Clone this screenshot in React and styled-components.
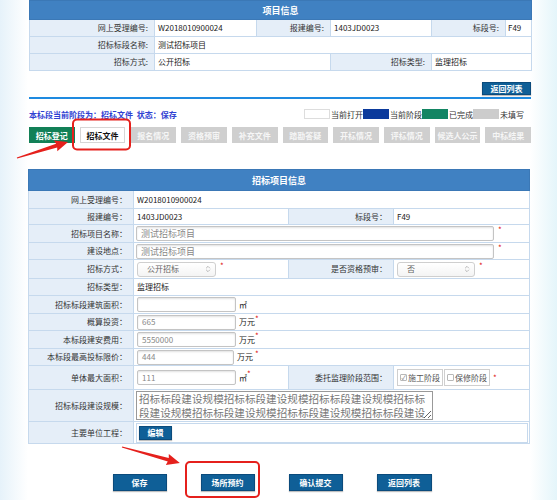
import React from 'react';
import styled, { createGlobalStyle } from 'styled-components';
import { ChevronsUpDown } from 'lucide-react';

const GlobalStyle = createGlobalStyle`
  html, body {
    margin: 0;
    padding: 0;
  }
  body {
    width: 557px;
    height: 500px;
    overflow: hidden;
    background: linear-gradient(to right, #e6f2fa 0, #fff 28px, #fff 530px, #e4f5fa 557px);
    font-family: "Noto Sans CJK SC", "Noto Sans", sans-serif;
  }
`;

const Page = styled.div`
  position: relative;
  width: 557px;
  height: 500px;
`;

const Content = styled.div`
  width: 502px;
  padding-left: 29px;
`;

const Table = styled.table`
  width: ${p => p.$w}px;
  margin-left: ${p => p.$shift || 0}px;
  border-collapse: collapse;
  table-layout: fixed;
  font-size: 8px;
  line-height: 1;
  color: #222;
`;

const Head = styled.th`
  height: ${p => p.$h}px;
  padding: 0;
  background: #4081c2;
  border: 1px solid #3b78b6;
  color: #fff;
  font-size: 9px;
  font-weight: 700;
  text-align: center;
`;

const Row = styled.tr`
  height: ${p => p.$h}px;
`;

const Label = styled.td`
  padding: 0 6px 0 0;
  background: #e5eef8;
  border: 1px solid #c6d9ed;
  color: #333;
  text-align: right;
  white-space: nowrap;
`;

const Value = styled.td`
  padding: 0 0 0 ${p => p.$pad ?? 3}px;
  background: #fff;
  border: 1px solid #c6d9ed;
  color: #222;
  white-space: nowrap;
`;

const Toolbar = styled.div`
  display: flex;
  justify-content: flex-end;
  margin-top: 11px;
`;

const SmallButton = styled.button`
  width: ${p => p.$w}px;
  height: ${p => p.$h}px;
  padding: 0;
  border: 1px solid #0b4b7c;
  background: #0f5f97;
  color: #fff;
  font-family: inherit;
  font-size: 8px;
  font-weight: 700;
  line-height: 1;
  box-shadow: 0 1px 1px rgba(0, 0, 0, 0.25);
`;

const BlueLine = styled.div`
  height: 2px;
  margin-top: 2px;
  background: #1e8ae0;
`;

const StatusRow = styled.div`
  display: flex;
  justify-content: space-between;
  align-items: center;
  height: 10px;
  margin-top: 10px;
  padding-right: 7px;
  font-size: 8px;
`;

const StatusText = styled.div`
  color: #2f41d2;
  font-weight: 700;
  white-space: pre;
`;

const Legend = styled.div`
  display: flex;
  align-items: center;
  color: #333;
`;

const Swatch = styled.span`
  width: 26px;
  height: 10px;
  box-sizing: border-box;
  background: ${p => p.$c};
  border: 1px solid ${p => (p.$c === '#fff' ? '#ddd' : p.$c)};
  margin-right: 1px;
`;

const Tabs = styled.div`
  display: flex;
  gap: 5px;
  height: 16px;
  margin-top: 8px;
`;

const tabColors = {
  done: { bg: '#128057', fg: '#fff', border: '#128057' },
  open: { bg: '#fff', fg: '#111', border: '#d6d6d6' },
  empty: { bg: '#cfcfcf', fg: '#f6f6f6', border: '#cfcfcf' },
};

const Tab = styled.div`
  flex: 1;
  display: flex;
  align-items: center;
  justify-content: center;
  box-sizing: border-box;
  background: ${p => tabColors[p.$state].bg};
  color: ${p => tabColors[p.$state].fg};
  border: 1px solid ${p => tabColors[p.$state].border};
  font-size: 8px;
  font-weight: 700;
  white-space: nowrap;
`;

const FormBlock = styled.div`
  margin-top: 26px;
`;

const TextInput = styled.div`
  display: inline-flex;
  align-items: center;
  vertical-align: middle;
  box-sizing: border-box;
  width: ${p => p.$w}px;
  height: 15px;
  padding: 0 4px;
  background: #fff;
  border: 1px solid #c4c4c4;
  border-radius: 2px;
  box-shadow: inset 0 1px 2px rgba(0, 0, 0, 0.12);
  color: #888;
  font-size: ${p => p.$fs || 8}px;
`;

const Select = styled.div`
  display: inline-flex;
  align-items: center;
  justify-content: space-between;
  vertical-align: middle;
  box-sizing: border-box;
  width: ${p => p.$w}px;
  height: 15px;
  padding: 0 3px 0 9px;
  border: 1px solid #cfcfcf;
  border-radius: 3px;
  background: linear-gradient(#fff, #f4f4f4);
  color: #666;
`;

const Star = styled.span`
  display: inline-block;
  vertical-align: top;
  margin-left: ${p => p.$gap ?? 4}px;
  color: #e01010;
  font-size: 8px;
  line-height: 8px;
`;

const Unit = styled.span`
  margin-left: 3px;
  color: #222;
  vertical-align: middle;
`;

const Options = styled.div`
  display: flex;
  align-items: center;
  gap: 1px;
`;

const Option = styled.div`
  display: flex;
  align-items: center;
  gap: 1px;
  height: 15px;
  padding: 0 2px;
  border: 1px solid #cfcfcf;
  color: #555;
`;

const Check = styled.span`
  display: inline-flex;
  align-items: center;
  justify-content: center;
  width: 7px;
  height: 7px;
  box-sizing: border-box;
  border: 1px solid #b8b8b8;
  border-radius: 1px;
  font-size: 6px;
  color: #666;
`;

const ScaleArea = styled.textarea`
  display: block;
  box-sizing: border-box;
  width: 297px;
  height: 29px;
  margin: 1px 0;
  padding: 0 2px;
  border: 1px solid #999;
  overflow: hidden;
  resize: both;
  color: #777;
  font-family: "Noto Sans CJK SC", sans-serif;
  font-size: 10.6px;
  line-height: 14px;
  letter-spacing: 0;
`;

const UnitBox = styled.div`
  display: flex;
  align-items: center;
  height: 18px;
  margin-right: 1px;
  padding-left: 2px;
  border: 1px solid #c6d9ed;
`;

const Actions = styled.div`
  display: flex;
  justify-content: center;
  gap: 34px;
  margin-top: 30px;
  padding-right: 16px;
`;

const Overlay = styled.svg`
  position: absolute;
  left: 0;
  top: 0;
  pointer-events: none;
`;

const Arrow = ({ x, y, len, angle }) => (
  <polygon
    transform={`translate(${x} ${y}) rotate(${angle})`}
    fill="#e5201c"
    points={`0,-0.6 ${len - 12},-1.9 ${len - 13},-5.6 ${len},0 ${len - 13},5.6 ${len - 12},1.9 0,0.6`}
  />
);

const tabs = [
  ['招标登记', 'done'],
  ['招标文件', 'open'],
  ['报名情况', 'empty'],
  ['资格预审', 'empty'],
  ['补充文件', 'empty'],
  ['踏勘答疑', 'empty'],
  ['开标情况', 'empty'],
  ['评标情况', 'empty'],
  ['候选人公示', 'empty'],
  ['中标结果', 'empty'],
];

const scaleText = '招标标段建设规模'.repeat(7);

export default function App() {
  return (
    <Page>
      <GlobalStyle />
      <Content>
        <Table $w={502}>
          <colgroup>
            <col style={{ width: 125 }} />
            <col style={{ width: 102 }} />
            <col style={{ width: 74 }} />
            <col style={{ width: 101 }} />
            <col style={{ width: 74 }} />
            <col style={{ width: 26 }} />
          </colgroup>
          <thead>
            <tr>
              <Head $h={18} colSpan={6}>项目信息</Head>
            </tr>
          </thead>
          <tbody>
            <Row $h={17}>
              <Label>网上受理编号:</Label>
              <Value>W2018010900024</Value>
              <Label>报建编号:</Label>
              <Value>1403JD0023</Value>
              <Label>标段号:</Label>
              <Value $pad={2}>F49</Value>
            </Row>
            <Row $h={17}>
              <Label>招标标段名称:</Label>
              <Value colSpan={5}>测试招标项目</Value>
            </Row>
            <Row $h={17}>
              <Label>招标方式:</Label>
              <Value colSpan={2}>公开招标</Value>
              <Label>招标类型:</Label>
              <Value colSpan={2}>监理招标</Value>
            </Row>
          </tbody>
        </Table>

        <Toolbar>
          <SmallButton $w={49} $h={13}>返回列表</SmallButton>
        </Toolbar>
        <BlueLine />

        <StatusRow>
          <StatusText>本标段当前阶段为：招标文件  状态：保存</StatusText>
          <Legend>
            <Swatch $c="#fff" />当前打开
            <Swatch $c="#0b3a9c" />当前阶段
            <Swatch $c="#138563" />已完成
            <Swatch $c="#cccccc" />未填写
          </Legend>
        </StatusRow>

        <Tabs>
          {tabs.map(([name, state]) => (
            <Tab key={name} $state={state}>{name}</Tab>
          ))}
        </Tabs>

        <FormBlock>
          <Table $w={501} $shift={-1}>
            <colgroup>
              <col style={{ width: 105 }} />
              <col style={{ width: 155 }} />
              <col style={{ width: 105 }} />
              <col style={{ width: 136 }} />
            </colgroup>
            <thead>
              <tr>
                <Head $h={20} colSpan={4}>招标项目信息</Head>
              </tr>
            </thead>
            <tbody>
              <Row $h={18}>
                <Label>网上受理编号：</Label>
                <Value colSpan={3}>W2018010900024</Value>
              </Row>
              <Row $h={16}>
                <Label>报建编号：</Label>
                <Value>1403JD0023</Value>
                <Label>标段号：</Label>
                <Value>F49</Value>
              </Row>
              <Row $h={18}>
                <Label>招标项目名称：</Label>
                <Value colSpan={3} $pad={2}>
                  <TextInput $w={358} $fs={9}>测试招标项目</TextInput>
                  <Star>*</Star>
                </Value>
              </Row>
              <Row $h={17}>
                <Label>建设地点：</Label>
                <Value colSpan={3} $pad={2}>
                  <TextInput $w={358} $fs={9}>测试招标项目</TextInput>
                  <Star>*</Star>
                </Value>
              </Row>
              <Row $h={19}>
                <Label>招标方式：</Label>
                <Value $pad={3}>
                  <Select $w={79}>
                    公开招标
                    <ChevronsUpDown size={8} color="#9a9a9a" />
                  </Select>
                  <Star>*</Star>
                </Value>
                <Label>是否资格预审：</Label>
                <Value $pad={3}>
                  <Select $w={78}>
                    否
                    <ChevronsUpDown size={8} color="#9a9a9a" />
                  </Select>
                  <Star>*</Star>
                </Value>
              </Row>
              <Row $h={17}>
                <Label>招标类型：</Label>
                <Value colSpan={3}>监理招标</Value>
              </Row>
              <Row $h={18}>
                <Label>招标标段建筑面积：</Label>
                <Value colSpan={3}>
                  <TextInput $w={99} />
                  <Unit>㎡</Unit>
                </Value>
              </Row>
              <Row $h={17}>
                <Label>概算投资：</Label>
                <Value colSpan={3}>
                  <TextInput $w={99}>665</TextInput>
                  <Unit>万元</Unit>
                  <Star $gap={0}>*</Star>
                </Value>
              </Row>
              <Row $h={18}>
                <Label>本标段建安费用：</Label>
                <Value colSpan={3}>
                  <TextInput $w={99}>5550000</TextInput>
                  <Unit>万元</Unit>
                  <Star $gap={0}>*</Star>
                </Value>
              </Row>
              <Row $h={17}>
                <Label>本标段最高投标限价：</Label>
                <Value colSpan={3}>
                  <TextInput $w={97}>444</TextInput>
                  <Unit>万元</Unit>
                  <Star $gap={2}>*</Star>
                </Value>
              </Row>
              <Row $h={24}>
                <Label>单体最大面积：</Label>
                <Value>
                  <TextInput $w={99}>111</TextInput>
                  <Unit>㎡</Unit>
                  <Star $gap={0}>*</Star>
                </Value>
                <Label>委托监理阶段范围：</Label>
                <Value $pad={3}>
                  <Options>
                    <Option><Check>✓</Check>施工阶段</Option>
                    <Option><Check />保修阶段</Option>
                    <Star $gap={2}>*</Star>
                  </Options>
                </Value>
              </Row>
              <Row $h={32}>
                <Label>招标标段建设规模：</Label>
                <Value colSpan={3} $pad={2}>
                  <ScaleArea defaultValue={scaleText} readOnly />
                </Value>
              </Row>
              <Row $h={22}>
                <Label>主要单位工程：</Label>
                <Value colSpan={3} $pad={2}>
                  <UnitBox>
                    <SmallButton $w={33} $h={14}>编辑</SmallButton>
                  </UnitBox>
                </Value>
              </Row>
            </tbody>
          </Table>
        </FormBlock>

        <Actions>
          <SmallButton $w={54} $h={17}>保存</SmallButton>
          <SmallButton $w={54} $h={17}>场所预约</SmallButton>
          <SmallButton $w={54} $h={17}>确认提交</SmallButton>
          <SmallButton $w={55} $h={17}>返回列表</SmallButton>
        </Actions>
      </Content>

      <Overlay width="557" height="500" viewBox="0 0 557 500">
        <rect x="73" y="119.5" width="57" height="30" rx="4" fill="none" stroke="#e5201c" strokeWidth="2" />
        <rect x="186" y="462" width="73" height="35" rx="4" fill="none" stroke="#e5201c" strokeWidth="2" />
        <Arrow x={17} y={158} len={53.5} angle={-17.4} />
        <Arrow x={122} y={447} len={60} angle={15.4} />
      </Overlay>
    </Page>
  );
}
